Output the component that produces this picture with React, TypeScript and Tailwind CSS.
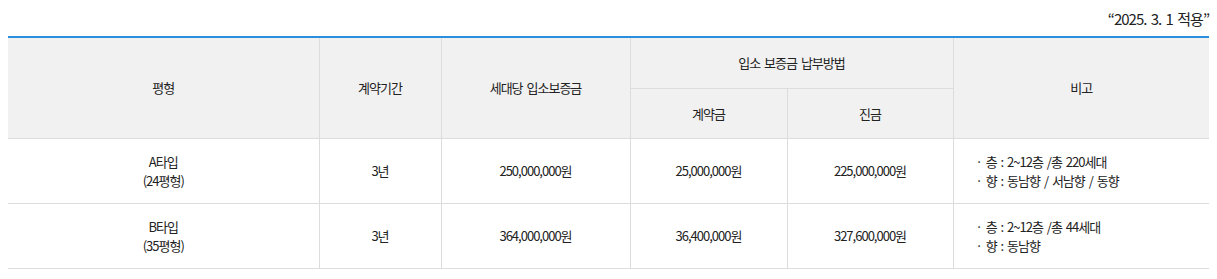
const rows = [
  {
    type: "A타입",
    size: "(24평형)",
    period: "3년",
    deposit: "250,000,000원",
    down: "25,000,000원",
    balance: "225,000,000원",
    notes: ["· 층 : 2~12층 /총 220세대", "· 향 : 동남향 / 서남향 / 동향"],
  },
  {
    type: "B타입",
    size: "(35평형)",
    period: "3년",
    deposit: "364,000,000원",
    down: "36,400,000원",
    balance: "327,600,000원",
    notes: ["· 층 : 2~12층 /총 44세대", "· 향 : 동남향"],
  },
];

const th = "border border-[#dcdcdc] bg-[#f1f1f1] font-normal text-center align-middle";
const td = "border border-[#dcdcdc] text-center align-middle";

export default function App() {
  return (
    <div
      className="bg-white px-2 text-[#222] tracking-[-1px] [word-spacing:2px]"
      style={{ fontFamily: '"Noto Sans CJK KR", "Noto Sans", sans-serif' }}
    >
      <p className="h-9 pt-[9px] text-right text-[15px] leading-[20px]">“2025. 3. 1 적용”</p>
      <table className="w-full table-fixed border-collapse border-t-2 border-t-[#2e8ede] text-[13px] leading-[19px]">
        <colgroup>
          <col className="w-[311px]" />
          <col className="w-[122px]" />
          <col className="w-[189px]" />
          <col className="w-[157px]" />
          <col className="w-[166px]" />
          <col />
        </colgroup>
        <thead>
          <tr className="h-[51px]">
            <th rowSpan={2} className={`${th} border-l-0 border-t-0`}>평형</th>
            <th rowSpan={2} className={`${th} border-t-0`}>계약기간</th>
            <th rowSpan={2} className={`${th} border-t-0`}>세대당 입소보증금</th>
            <th colSpan={2} className={`${th} border-t-0`}>입소 보증금 납부방법</th>
            <th rowSpan={2} className={`${th} border-r-0 border-t-0`}>비고</th>
          </tr>
          <tr className="h-[50px]">
            <th className={th}>계약금</th>
            <th className={th}>진금</th>
          </tr>
        </thead>
        <tbody>
          {rows.map((r) => (
            <tr key={r.type} className="h-[65px]">
              <td className={`${td} border-l-0`}>
                <div>{r.type}</div>
                <div>{r.size}</div>
              </td>
              <td className={td}>{r.period}</td>
              <td className={td}>{r.deposit}</td>
              <td className={td}>{r.down}</td>
              <td className={td}>{r.balance}</td>
              <td className={`${td} border-r-0 pl-[22px] text-left`}>
                {r.notes.map((n) => (
                  <div key={n}>{n}</div>
                ))}
              </td>
            </tr>
          ))}
        </tbody>
      </table>
    </div>
  );
}
